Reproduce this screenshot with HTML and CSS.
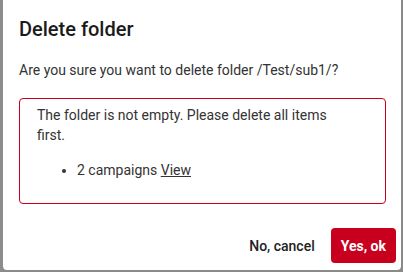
FILE: index.html
```html
<!DOCTYPE html>
<html>
<head>
<meta charset="utf-8">
<link rel="stylesheet" href="styles.css">
</head>
<body>
<div class="dialog">
  <h1 class="title">Delete folder</h1>
  <p class="message">Are you sure you want to delete folder /Test/sub1/?</p>
  <div class="alert">
    <p class="alert-text">The folder is not empty. Please delete all items first.</p>
    <ul class="items">
      <li>2 campaigns <a class="link" href="#">View</a></li>
    </ul>
  </div>
  <div class="footer">
    <button class="btn btn-cancel">No, cancel</button>
    <button class="btn btn-ok">Yes, ok</button>
  </div>
</div>
</body>
</html>
```
FILE: styles.css
```css
html, body {
  margin: 0;
  padding: 0;
  width: 403px;
  height: 272px;
  overflow: hidden;
}
body {
  background: linear-gradient(to right, #8c8c8c 0 3px, transparent 3px), #5e5e5e;
  background-color: #8a8a8a;
  font-family: Roboto, "Noto Sans", sans-serif;
  padding-left: 3px;
  box-sizing: border-box;
}
.dialog {
  width: 398px;
  height: 270px;
  background: #fff;
  border-radius: 0 0 4px 4px;
  box-sizing: border-box;
  padding: 17px 0 0 16px;
  display: flex;
  flex-direction: column;
}
.title {
  margin: 0;
  font-size: 20px;
  line-height: 24px;
  font-weight: 500;
  color: #1b1b1b;
}
.message {
  margin: 19px 0 0;
  font-size: 14px;
  line-height: 20px;
  color: #333;
}
.alert {
  margin-top: 18px;
  width: 367px;
  height: 106px;
  box-sizing: border-box;
  border: 1px solid #c8001e;
  border-radius: 4px;
  padding: 6px 17px 0 17px;
  font-size: 14px;
  line-height: 20px;
  color: #333;
}
.alert-text {
  margin: 0;
  width: 300px;
}
.items {
  margin: 15px 0 0;
  padding-left: 40px;
}
.link {
  color: #333;
  text-decoration: underline;
}
.footer {
  margin-top: 24px;
  display: flex;
  justify-content: flex-end;
  align-items: center;
  gap: 8px;
  padding-right: 5px;
}
.btn {
  font-family: Roboto, "Noto Sans", sans-serif;
  font-size: 14px;
  height: 35px;
  border: none;
  border-radius: 4px;
  cursor: pointer;
}
.btn-cancel {
  background: transparent;
  color: #222;
  font-weight: 500;
  padding: 0 8px;
}
.btn-ok {
  background: #c8001e;
  color: #fff;
  font-weight: 700;
  padding: 0 10px;
}
```
